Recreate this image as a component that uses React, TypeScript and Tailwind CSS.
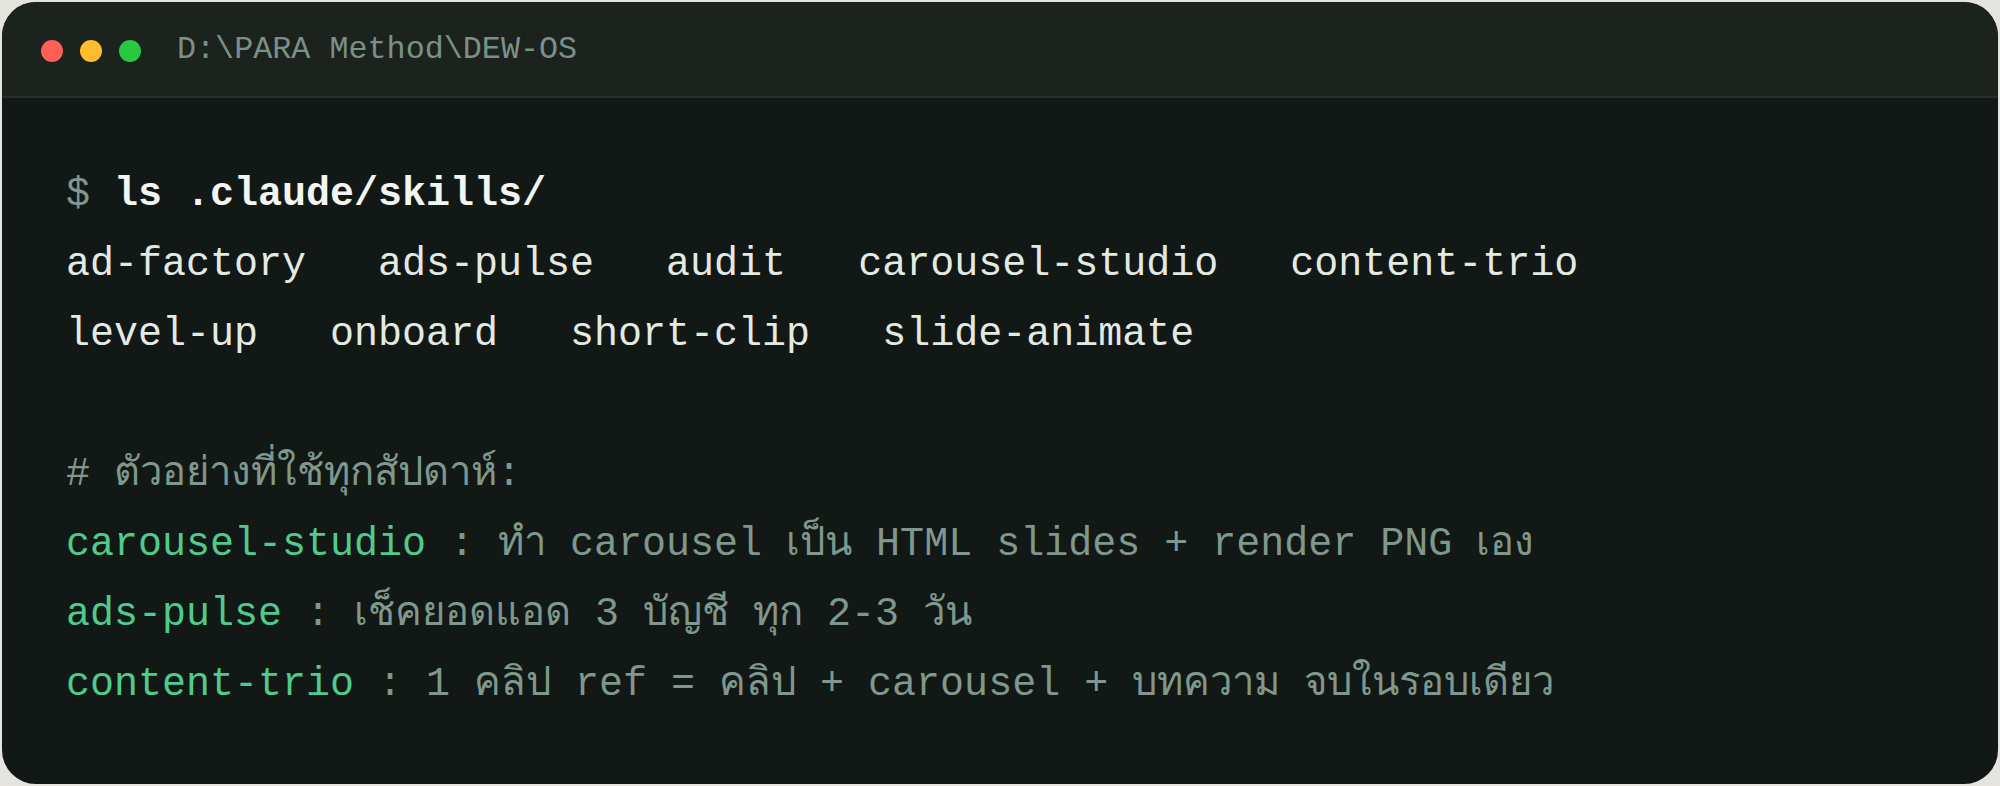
const mono = { fontFamily: '"Liberation Mono", "DejaVu Sans Mono", "Noto Sans", monospace' }

const examples = [
  { key: 'carousel-studio', desc: 'ทำ carousel เป็น HTML slides + render PNG เอง' },
  { key: 'ads-pulse', desc: 'เช็คยอดแอด 3 บัญชี ทุก 2-3 วัน' },
  { key: 'content-trio', desc: '1 คลิป ref = คลิป + carousel + บทความ จบในรอบเดียว' },
]

export default function App() {
  return (
    <div className="flex h-[786px] w-full bg-[#e4e3dd] p-[2px]">
      <div className="flex flex-1 flex-col overflow-hidden rounded-[34px] bg-[#121815]" style={mono}>
        {/* Title bar */}
        <div className="flex h-[96px] items-center border-b-2 border-[#27302b] bg-[#1c231f] pl-[39px] pt-[4px]">
          <div className="flex gap-[17px]">
            <span className="size-[22px] rounded-full bg-[#ff5f57]" />
            <span className="size-[22px] rounded-full bg-[#febc2e]" />
            <span className="size-[22px] rounded-full bg-[#28c840]" />
          </div>
          <span className="ml-[36px] whitespace-pre text-[31.75px] text-[#7b9187]">D:\PARA Method\DEW-OS</span>
        </div>

        {/* Terminal body */}
        <div className="whitespace-pre pl-[64px] pt-[62px] text-[40px] leading-[70px] text-[#e3eae4]">
          <div>
            <span className="text-[#7f978c]">$ </span>
            <span className="font-bold text-[#f2f5f1]">ls .claude/skills/</span>
          </div>
          <div>{'ad-factory   ads-pulse   audit   carousel-studio   content-trio'}</div>
          <div>{'level-up   onboard   short-clip   slide-animate'}</div>
          <div>&nbsp;</div>
          <div className="text-[#7f978c]"># ตัวอย่างที่ใช้ทุกสัปดาห์:</div>
          {examples.map((ex) => (
            <div key={ex.key}>
              <span className="text-[#4ecb8d]">{ex.key}</span>
              <span className="text-[#7f978c]">{' : ' + ex.desc}</span>
            </div>
          ))}
        </div>
      </div>
    </div>
  )
}
